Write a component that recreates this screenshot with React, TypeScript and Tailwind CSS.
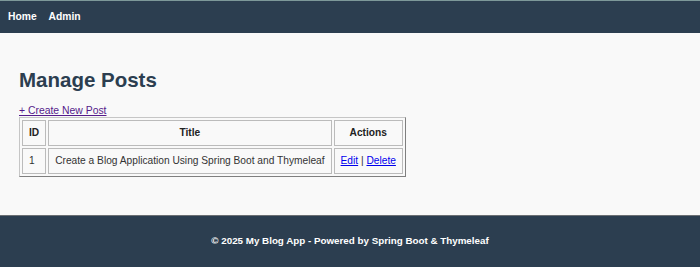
export default function App() {
  return (
    <div className="min-h-screen flex flex-col bg-[#f9f9f9] font-['Liberation_Sans',Arial,sans-serif]">
      {/* Navbar */}
      <nav className="h-[33px] bg-[#2c3e50] border-t border-[#7d9899] flex items-center gap-[12px] px-[8px]">
        <a href="#" className="text-white text-[10.3px] font-bold">Home</a>
        <a href="#" className="text-white text-[10.3px] font-bold">Admin</a>
      </nav>

      {/* Content */}
      <main className="px-[19px] pt-[34px] h-[182px]">
        <h1 className="text-[20.5px] font-bold text-[#2c3e50] leading-[26px]">Manage Posts</h1>
        <a href="#" className="block mt-[11px] text-[10.4px] leading-[13px] text-[#551a8b] underline">+ Create New Post</a>
        <table className="border-separate border-spacing-[2px] border border-t-[#c6c6c6] border-l-[#c6c6c6] border-b-[#7f7f7f] border-r-[#7f7f7f] text-[10.2px] text-[#333]">
          <thead>
            <tr>
              <th className="border border-[#bbb] px-[6px] h-[26px] font-bold text-center text-[#222]">ID</th>
              <th className="border border-[#bbb] px-[6px] h-[26px] font-bold text-center text-[#222]">Title</th>
              <th className="border border-[#bbb] px-[6px] h-[26px] font-bold text-center text-[#222]">Actions</th>
            </tr>
          </thead>
          <tbody>
            <tr>
              <td className="border border-[#bbb] px-[6px] h-[26px]">1</td>
              <td className="border border-[#bbb] px-[6px] h-[26px]">Create a Blog Application Using Spring Boot and Thymeleaf</td>
              <td className="border border-[#bbb] px-[6px] h-[26px] text-center">
                <a href="#" className="text-[#0000ee] underline">Edit</a> | <a href="#" className="text-[#0000ee] underline">Delete</a>
              </td>
            </tr>
          </tbody>
        </table>
      </main>

      {/* Footer */}
      <footer className="h-[52px] bg-[#2c3e50] border-t border-[#6b6f73] flex items-center justify-center">
        <p className="text-white text-[9.8px] font-bold">© 2025 My Blog App - Powered by Spring Boot &amp; Thymeleaf</p>
      </footer>
    </div>
  );
}
